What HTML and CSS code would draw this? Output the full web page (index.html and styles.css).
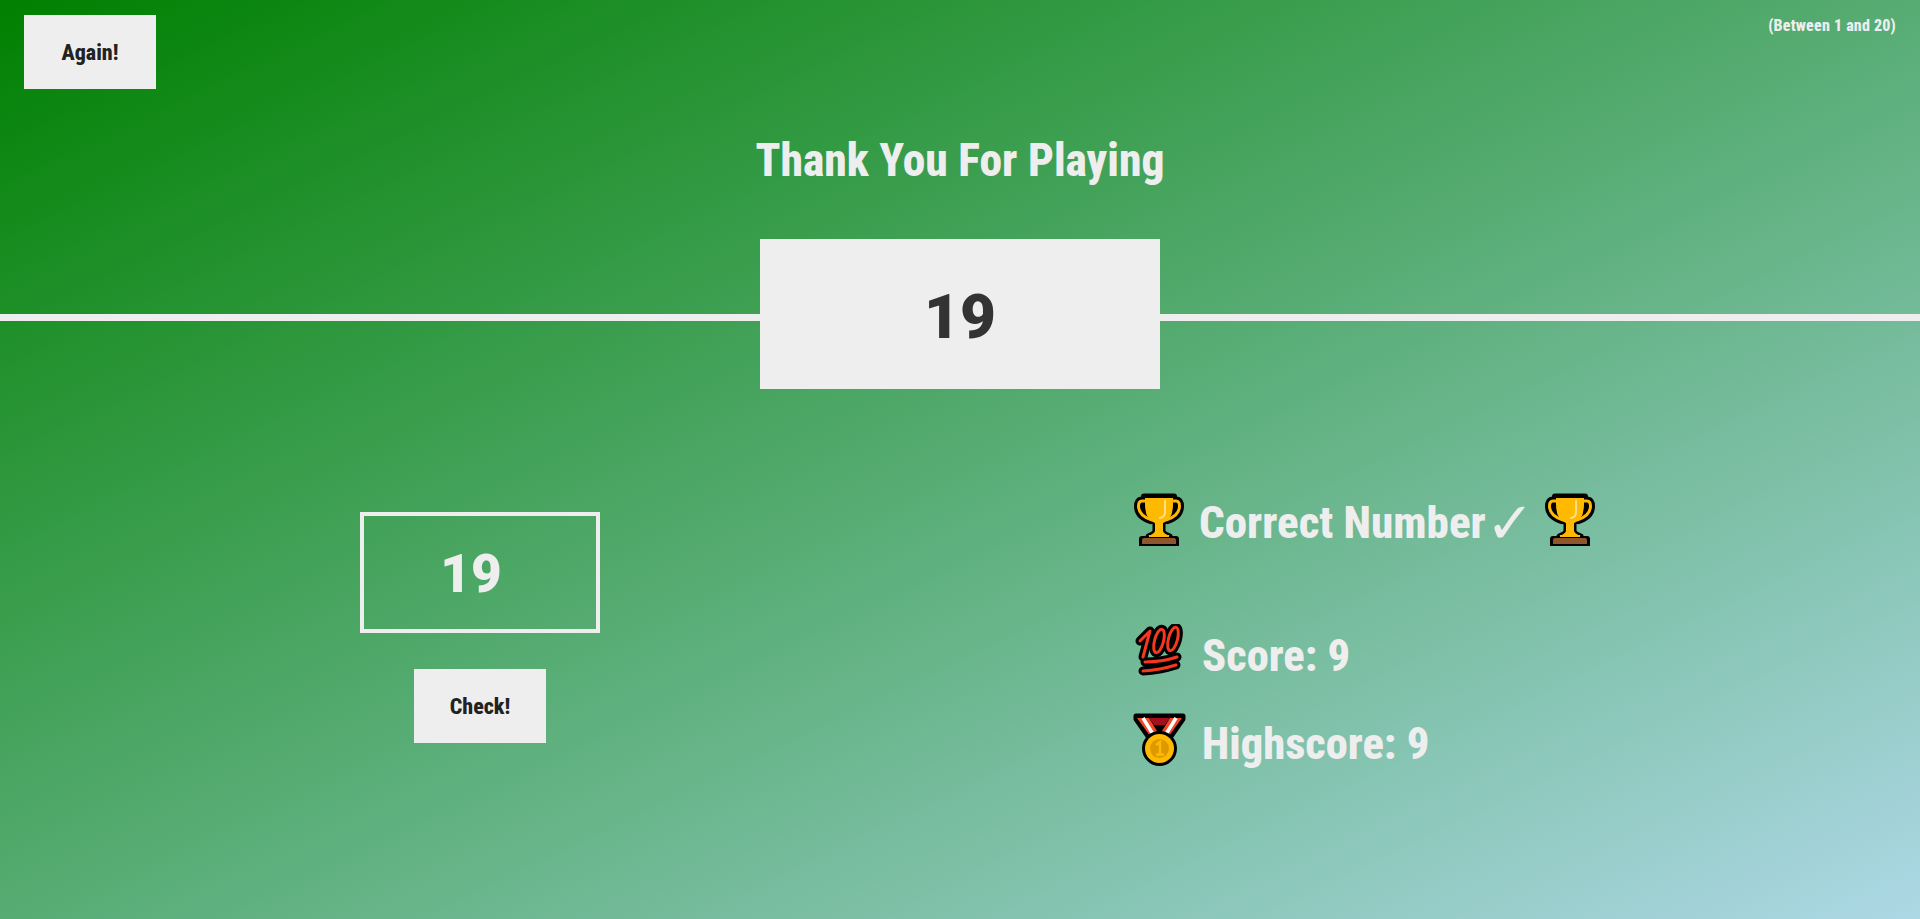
FILE: index.html
```html
<!DOCTYPE html>
<html>
<head>
<meta charset="utf-8">
<title>Guess My Number</title>
<link rel="stylesheet" href="styles.css">
</head>
<body>

<header class="top">
   <div class="toprow">
      <button class="btn">Again!</button>
      <p class="between">(Between 1 and 20)</p>
   </div>
   <h1 class="title">Thank You For Playing</h1>
   <div class="numberrow">
      <div class="rule"></div>
      <div class="number">19</div>
      <div class="rule"></div>
   </div>
</header>

<main class="game">
   <section class="left">
      <div class="guess">19</div>
      <button class="btn">Check!</button>
   </section>

   <section class="right">
      <p class="message">
         <svg class="emoji" viewBox="9 9 50 54"><use href="#trophy"/></svg>
         <span>Correct Number</span>
         <span class="tick">✓</span>
         <svg class="emoji" viewBox="9 9 50 54"><use href="#trophy"/></svg>
      </p>
      <p class="stat score">
         <svg class="emoji" viewBox="11 6 54 54">
            <g fill="none" stroke-linecap="round" stroke-linejoin="round">
               <g stroke="#000" stroke-width="9">
                  <path d="M18 23 L28 13 L21 39"/>
                  <ellipse cx="37" cy="23" rx="4.5" ry="12" transform="rotate(15 37 23)"/>
                  <ellipse cx="51" cy="21" rx="4.5" ry="12" transform="rotate(15 51 21)"/>
                  <path d="M23 44 Q40 44 55 39 M21 53 Q38 52 54 47"/>
               </g>
               <g stroke="#f4391c" stroke-width="3">
                  <path d="M18 23 L28 13 L21 39"/>
                  <ellipse cx="37" cy="23" rx="4.5" ry="12" transform="rotate(15 37 23)"/>
                  <ellipse cx="51" cy="21" rx="4.5" ry="12" transform="rotate(15 51 21)"/>
                  <path d="M23 44 Q40 44 55 39 M21 53 Q38 52 54 47"/>
               </g>
            </g>
         </svg>
         <span>Score: 9</span>
      </p>
      <p class="stat high">
         <svg class="emoji" viewBox="9 3 54 54">
            <path d="M12 7 H59 V10 L43 33 H28 L12 10 Z" fill="#000" stroke="#000" stroke-width="5" stroke-linejoin="round"/>
            <path d="M13 9 H25 L36 27 L29 31 Z" fill="#ea4a2a"/>
            <path d="M58 9 H46 L35 27 L42 31 Z" fill="#ea4a2a"/>
            <path d="M25 9 H46 L41 16 H30 Z" fill="#a50f1c"/>
            <path d="M19 9 L32 30 M52 9 L39 30" stroke="#fff" stroke-width="3.5"/>
            <circle cx="35.5" cy="39.5" r="17.5" fill="#000"/>
            <circle cx="35.5" cy="39.5" r="14.5" fill="#ffb900"/>
            <circle cx="35.5" cy="39.5" r="9.5" fill="#dc9a00"/>
            <path d="M32 36 L36 33 V45 M32 45.5 H40" stroke="#ffb900" stroke-width="2.5" fill="none"/>
         </svg>
         <span>Highscore: 9</span>
      </p>
   </section>
</main>

<svg class="defs" width="0" height="0">
   <defs>
      <g id="trophy">
         <rect x="16" y="9.5" width="36" height="8" rx="3" fill="#000"/>
         <g fill="none" stroke="#000" stroke-width="9">
            <path d="M21 17 H17 Q13.5 17 13.5 22 Q13.5 32 27 36"/>
            <path d="M47 17 H51 Q54.5 17 54.5 22 Q54.5 32 41 36"/>
         </g>
         <path d="M20 14 H48 V20 Q48 36 38 39 V47 Q39 50 45 52 H23 Q29 50 30 47 V39 Q20 36 20 20 Z" fill="#ffb900" stroke="#000" stroke-width="5" paint-order="stroke" stroke-linejoin="round"/>
         <path d="M14 62 V55 Q14 52 17 52 H51 Q54 52 54 55 V62 Z" fill="#000"/>
         <g fill="none" stroke="#ffb900" stroke-width="3">
            <path d="M21 17 H17 Q13.5 17 13.5 22 Q13.5 32 27 36"/>
            <path d="M47 17 H51 Q54.5 17 54.5 22 Q54.5 32 41 36"/>
         </g>
         <path d="M24 14 H44 V22 Q44 36 36 40 V50 H32 V40 Q24 36 24 22 Z" fill="#ffb900"/>
         <path d="M40 17 V28 Q40 33 35 34" stroke="#ffe08a" stroke-width="2" fill="none" stroke-linecap="round"/>
         <path d="M24 51 H44 V53 H24 Z" fill="#ffb900"/>
         <path d="M17 60 V56 Q17 54 19 54 H49 Q51 54 51 56 V60 Z" fill="#8e562e"/>
      </g>
   </defs>
</svg>

</body>
</html>
```

FILE: styles.css
```css
html , body {
   margin:0px;
   padding:0px;
   height:100%;
}

body {
   background:linear-gradient(to bottom right, green, lightblue);
   font-family:"Roboto", sans-serif;
   font-stretch:75%;
   font-weight:800;
   color:#eee;
   overflow:hidden;
}

p , h1 {
   margin:0px;
}

.defs {
   display:block;
}

.toprow {
   display:flex;
   justify-content:space-between;
   align-items:flex-start;
   padding:15px 24px 0px 24px;
}

.between {
   font-size:16px;
   font-weight:800;
   letter-spacing:0.2px;
   line-height:20px;
   margin-top:1px;
}

.btn {
   width:132px;
   height:74px;
   border:0px;
   padding:0px;
   background:#eee;
   color:#222;
   font-family:inherit;
   font-stretch:75%;
   font-weight:800;
   font-size:22px;
}

.title {
   margin-top:42px;
   text-align:center;
   font-size:45.5px;
   font-weight:800;
   line-height:60px;
}

.numberrow {
   display:flex;
   align-items:flex-start;
   margin-top:48px;
}

/* the line sits just under the middle of the number box */
.rule {
   flex:1;
   height:7px;
   margin-top:75px;
   background:#eee;
}

.number {
   width:400px;
   height:150px;
   line-height:156px;
   text-align:center;
   background:#eee;
   color:#333;
   font-size:62px;
   font-stretch:92%;
   font-weight:900;
}

.game {
   display:grid;
   grid-template-columns:960px 1fr;
   margin-top:102px;
}

.left {
   display:flex;
   flex-direction:column;
   align-items:center;
   padding-top:21px;
}

.guess {
   box-sizing:border-box;
   width:240px;
   height:121px;
   border:4px solid #eee;
   padding-right:18px;
   margin-bottom:36px;
   font-size:53px;
   font-stretch:92%;
   font-weight:900;
   line-height:117px;
   text-align:center;
}

.right {
   padding-left:173px;
   padding-top:5px;
}

.message , .stat {
   display:flex;
   align-items:center;
   font-size:45px;
   line-height:54px;
}

.message {
   gap:15px;
}

.message .emoji {
   margin-top:-4px;
   margin-bottom:2px;
}

.message .emoji:first-child {
   margin-left:1px;
}

.tick {
   font-family:"DejaVu Sans", sans-serif;
   font-stretch:100%;
   font-weight:700;
   font-size:58px;
   margin-left:-15px;
   margin-right:-4px;
}

.stat {
   gap:15px;
   font-size:44.5px;
}

.stat .emoji {
   width:54px;
   margin-top:-9px;
   margin-bottom:1px;
}

.score {
   margin-top:79px;
}

.high {
   margin-top:34px;
}

.emoji {
   width:50px;
   height:54px;
   flex:none;
}
```
